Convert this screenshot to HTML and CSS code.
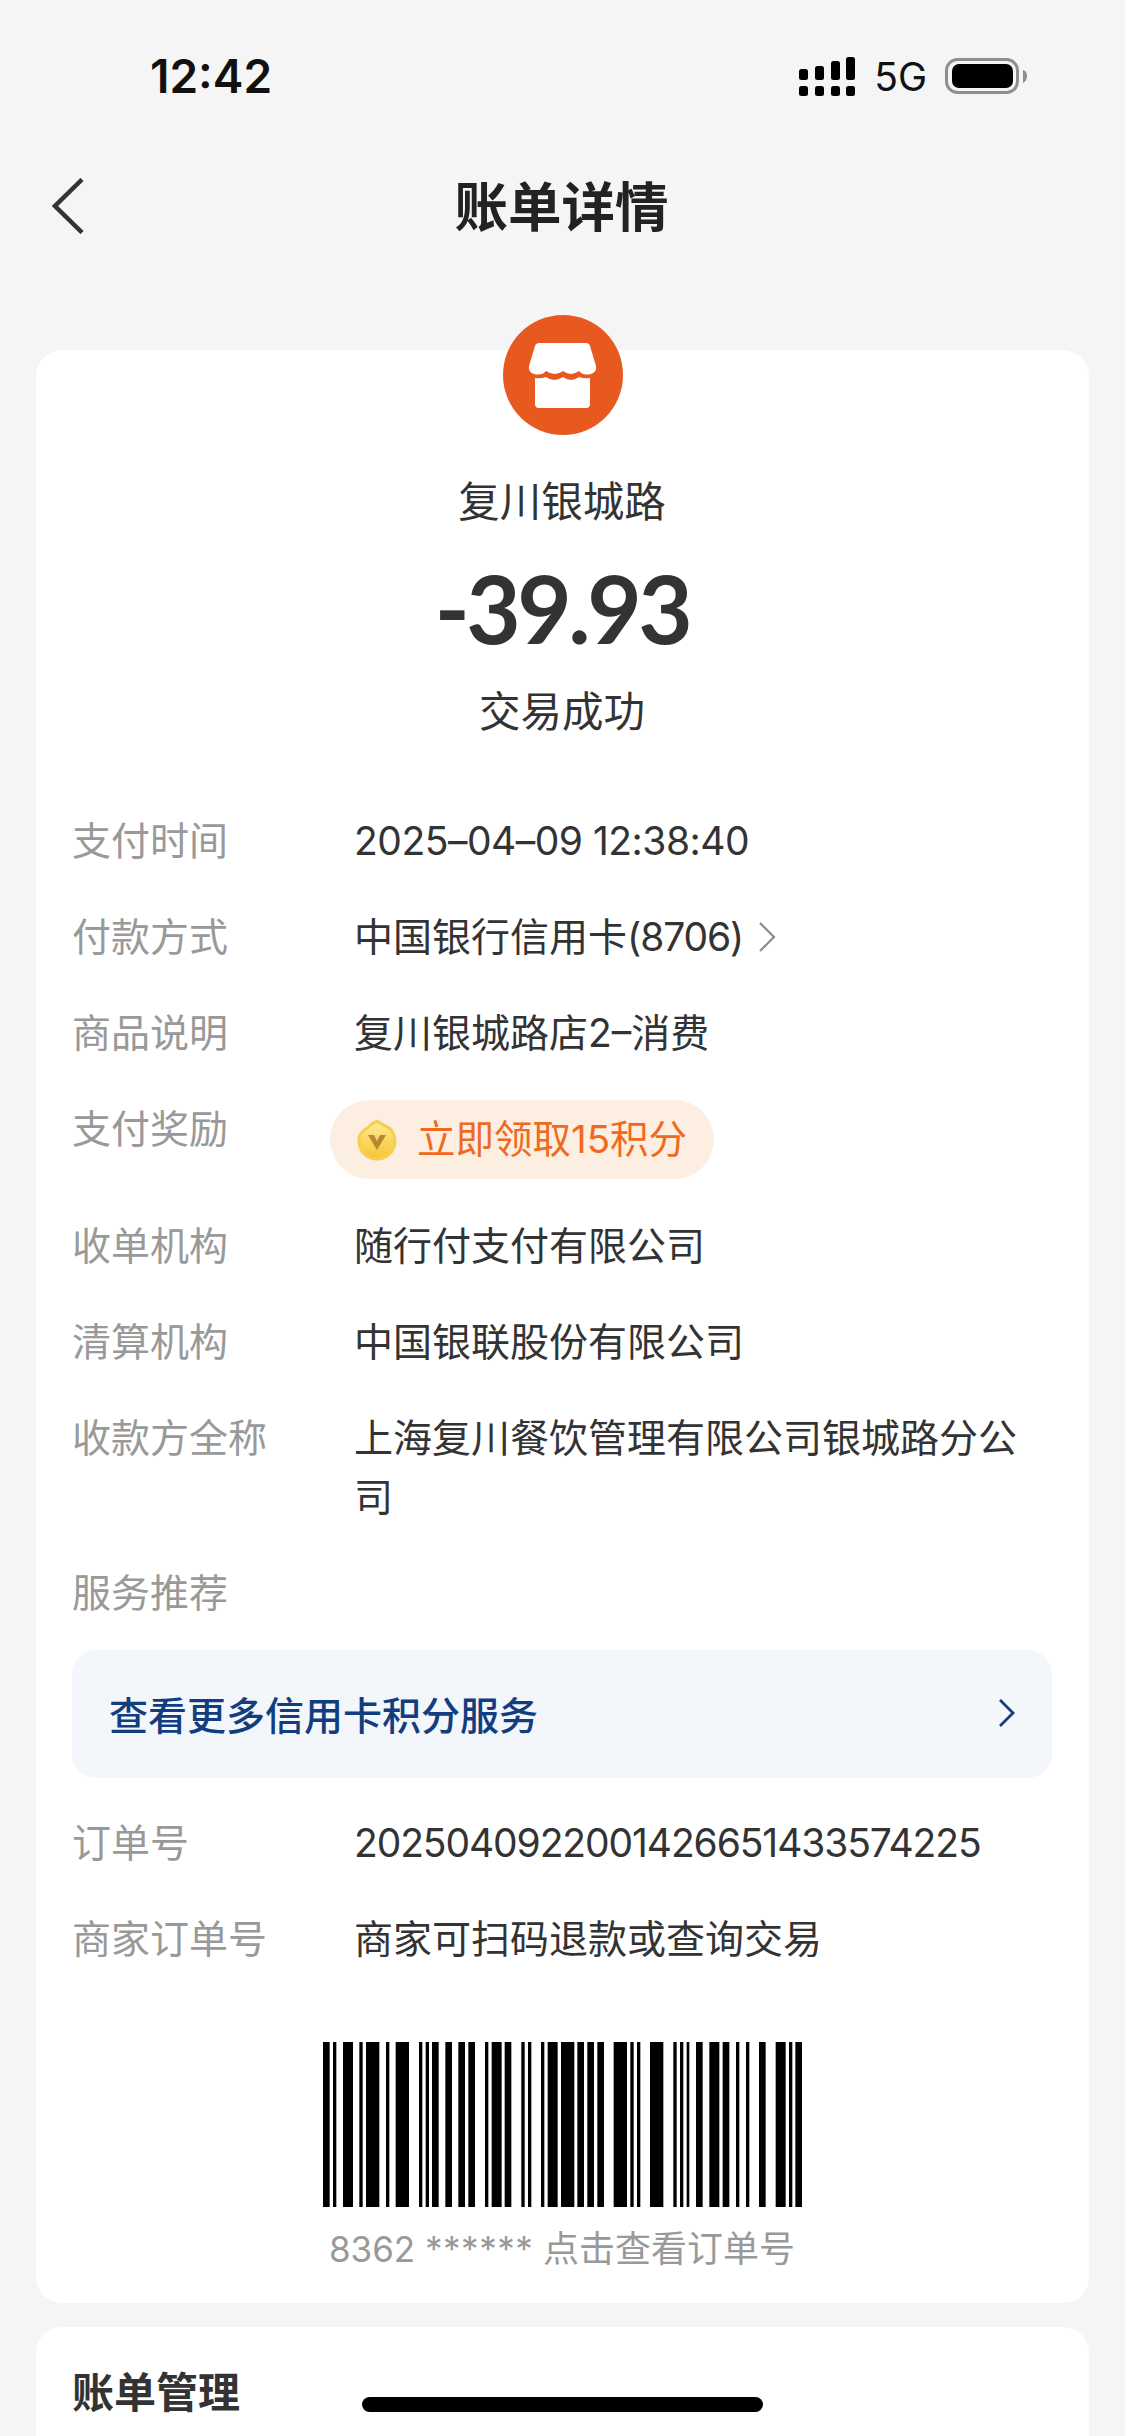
FILE: index.html
```html
<!DOCTYPE html>
<html lang="zh-CN">
<head>
<meta charset="utf-8">
<title>账单详情</title>
<link rel="stylesheet" href="styles.css">
</head>
<body>
<div class="page">
  <header class="status">
    <span class="time">12:42</span>
    <div class="status-right">
      <svg class="signal" viewBox="0 0 56 39" width="56" height="39">
        <g fill="#000">
          <rect x="0" y="12" width="9" height="11" rx="2.5"/><rect x="0" y="29" width="9" height="10" rx="2.5"/>
          <rect x="16" y="9" width="9" height="14" rx="2.5"/><rect x="16" y="29" width="9" height="10" rx="2.5"/>
          <rect x="32" y="4" width="9" height="19" rx="2.5"/><rect x="32" y="29" width="9" height="10" rx="2.5"/>
          <rect x="47" y="0" width="9" height="23" rx="2.5"/><rect x="47" y="29" width="9" height="10" rx="2.5"/>
        </g>
      </svg>
      <span class="net">5G</span>
      <svg class="battery" viewBox="0 0 82 36" width="82" height="36">
        <rect x="1.5" y="1.5" width="71" height="33" rx="11" fill="none" stroke="#8f8f8f" stroke-width="3"/>
        <rect x="7" y="6" width="61" height="24" rx="7" fill="#000"/>
        <path d="M78 12q4 1 4 6t-4 7z" fill="#8f8f8f"/>
      </svg>
    </div>
  </header>
  <nav class="nav">
    <svg class="back" viewBox="0 0 32 56" width="32" height="56"><path d="M30 1.5 3 28l27 26.5" fill="none" stroke="#333" stroke-width="4.500"/></svg>
    <h1 class="nav-title">账单详情</h1>
  </nav>

  <main class="card card-main">
    <svg class="shop" viewBox="0 0 120 120" width="120" height="120">
      <circle cx="60" cy="60" r="60" fill="#e8591f"/>
      <path fill="#fff" d="M37 28H83q3 0 4 3l6 20q1 6-5 8q-8 2-12-3q-8 6-16 0q-8 6-17 0q-4 5-12 3q-6-2-5-8l6-20q1-3 4-3z"/>
      <path fill="#fff" d="M32 63q6 1 11-1q8 6 17 0q8 6 16 0q5 2 11 1V89q0 4-4 4H36q-4 0-4-4z"/>
    </svg>
    <div class="hero">
      <div class="merchant">复川银城路</div>
      <div class="amount">-39.93</div>
      <div class="state">交易成功</div>
    </div>

    <dl class="rows">
      <div class="row"><dt>支付时间</dt><dd><span class="num-wide">2025–04–09 12:38:40</span></dd></div>
      <div class="row"><dt>付款方式</dt><dd class="with-arrow"><span>中国银行信用卡<span class="num">(8706)</span></span><svg class="arrow" viewBox="0 0 20 32" width="20" height="32"><path d="M3 2l14 14L3 30" fill="none" stroke="#8a8a8a" stroke-width="2.2"/></svg></dd></div>
      <div class="row"><dt>商品说明</dt><dd>复川银城路店2–消费</dd></div>
      <div class="row"><dt>支付奖励</dt>
        <dd class="reward">
          <span class="pill">
            <svg class="coin" viewBox="0 0 40 42" width="40" height="42">
              <defs><linearGradient id="g" x1="0" y1="0" x2="0" y2="1"><stop offset="0" stop-color="#ffe98f"/><stop offset="1" stop-color="#f5c638"/></linearGradient></defs>
              <path d="M20 0.5 28 5q11 4 11.500 16.500C39.500 33 31 41.500 20 41.500S.5 33 .5 21.500C1 9 12 9 12 5z" fill="#f6cf4b"/>
              <path d="M20 4 27 8q9 3 9.500 13.500C36.500 31 29.500 38.500 20 38.500S3.500 31 3.500 21.500C4 11 13 11 13 8z" fill="url(#g)"/>
              <path d="M11 16h6l3 6 3-6h6l-9 15z" fill="#b5892c"/>
            </svg>
            <span class="pill-text">立即领取15积分</span>
          </span>
        </dd>
      </div>
      <div class="row"><dt>收单机构</dt><dd>随行付支付有限公司</dd></div>
      <div class="row"><dt>清算机构</dt><dd>中国银联股份有限公司</dd></div>
      <div class="row"><dt>收款方全称</dt><dd>上海复川餐饮管理有限公司银城路分公司</dd></div>
      <div class="row row-service"><dt>服务推荐</dt></div>
      <div class="service">
        <span>查看更多信用卡积分服务</span>
        <svg viewBox="0 0 20 30" width="20" height="30"><path d="M3 2l13 13L3 28" fill="none" stroke="#123e80" stroke-width="2.8"/></svg>
      </div>
      <div class="row"><dt>订单号</dt><dd><span class="num">2025040922001426651433574225</span></dd></div>
      <div class="row"><dt>商家订单号</dt><dd>商家可扫码退款或查询交易</dd></div>
    </dl>

    <svg class="barcode" viewBox="69 0 1437 495" width="479" height="165" preserveAspectRatio="none">
      <path fill="#000" d="M69 0h20v495h-20zM99 0h10v495h-10zM129 0h30v495h-30zM178 0h10v495h-10zM198 0h40v495h-40zM258 0h10v495h-10zM287 0h40v495h-40zM357 0h10v495h-10zM377 0h10v495h-10zM396 0h20v495h-20zM436 0h20v495h-20zM475 0h20v495h-20zM505 0h20v495h-20zM555 0h10v495h-10zM575 0h30v495h-30zM614 0h20v495h-20zM664 0h10v495h-10zM684 0h10v495h-10zM723 0h10v495h-10zM743 0h30v495h-30zM783 0h40v495h-40zM832 0h20v495h-20zM862 0h20v495h-20zM892 0h20v495h-20zM941 0h40v495h-40zM991 0h10v495h-10zM1011 0h10v495h-10zM1050 0h40v495h-40zM1120 0h10v495h-10zM1140 0h10v495h-10zM1160 0h8v495h-8zM1188 0h20v495h-20zM1228 0h30v495h-30zM1268 0h20v495h-20zM1308 0h10v495h-10zM1338 0h10v495h-10zM1377 0h20v495h-20zM1427 0h30v495h-30zM1467 0h10v495h-10zM1486 0h20v495h-20z"/>
    </svg>
    <div class="barcode-caption"><span class="cap-num">8362</span> <span class="cap-stars">******</span> <span class="cap-text">点击查看订单号</span></div>
  </main>

  <section class="card card-second">
    <h2 class="section-title">账单管理</h2>
  </section>

  <div class="home-bar"></div>
</div>
</body>
</html>
```

FILE: styles.css
```css
* { box-sizing: border-box; }
html, body { margin: 0; padding: 0; height: 2436px; overflow: hidden; }
body {
  background: #f5f5f5;
  font-family: "Inter", "Noto Sans CJK SC", sans-serif;
  color: #333;
}
.page { position: relative; width: 1125px; height: 2436px; overflow: hidden; }

.status {
  height: 152px;
  display: flex;
  justify-content: space-between;
  align-items: center;
  padding: 0 98px 0 150px;
}
.time { font-size: 46px; font-weight: 600; color: #111; }
.status-right { display: flex; align-items: center; }
.signal { margin-right: 19px; }
.net { font-size: 39px; color: #111; margin-right: 18px; }

.nav {
  position: relative;
  height: 108px;
  margin-bottom: 90px;
  padding: 3px 2px 0 0;
  display: flex;
  align-items: center;
  justify-content: center;
}
.back { position: absolute; left: 52px; top: 26px; }
.nav-title { margin: 0; font-size: 53.500px; font-weight: 700; line-height: 70px; color: #222; }

.card { margin: 0 36px; background: #fff; border-radius: 26px; }
.card-main { position: relative; height: 1953px; padding: 122px 37px 0 36px; }
.shop { position: absolute; left: 467px; top: -35px; }

.hero { text-align: center; }
.merchant { font-size: 41.500px; line-height: 60px; color: #333; }
.amount {
  font-family: "Lato", "Inter", sans-serif;
  font-size: 94px;
  font-weight: 700;
  line-height: 120px;
  letter-spacing: -3.500px;
  margin-top: 16px;
  color: #333;
}
.state { font-size: 41.500px; line-height: 60px; margin-top: 14px; color: #333; }

.rows { margin: 69px 0 0; }
.row { display: flex; margin-bottom: 37px; font-size: 39px; line-height: 59px; }
.row dt { flex: 0 0 282px; color: #999; }
.row dd { flex: 1; margin: 0; color: #333; }
.num { letter-spacing: -1.100px; }
.num-wide { letter-spacing: -0.500px; }
.with-arrow { display: flex; align-items: center; }
.arrow { margin-left: 14px; }

.reward { display: flex; }
.pill {
  display: flex;
  align-items: center;
  height: 79px;
  width: 384px;
  margin: 1px 0 0 -24px;
  padding-left: 27px;
  border-radius: 40px;
  background: #fdeee2;
}
.pill-text { margin-left: 20px; font-size: 38.500px; color: #ef6a20; }

.row-service { margin-bottom: 28px; }
.service {
  display: flex;
  align-items: center;
  justify-content: space-between;
  height: 128px;
  padding: 0 35px 3px 37px;
  margin-bottom: 35px;
  border-radius: 24px;
  background: #f3f6fb;
  color: #123e80;
  font-size: 39px;
  font-weight: 500;
}

.barcode { display: block; margin: 74px auto 0; }
.barcode-caption { margin-top: 17px; font-size: 35px; line-height: 50px; color: #999; text-align: center; }
.cap-stars { letter-spacing: 0.500px; }
.cap-text { font-size: 36px; }

.card-second { height: 200px; margin-top: 24px; padding: 36px 37px 36px 36px; }
.section-title { margin: 0; font-size: 42px; line-height: 60px; font-weight: 700; color: #333; }

.home-bar {
  position: absolute;
  left: 362px;
  top: 2397px;
  width: 401px;
  height: 15px;
  border-radius: 8px;
  background: #000;
}
```
